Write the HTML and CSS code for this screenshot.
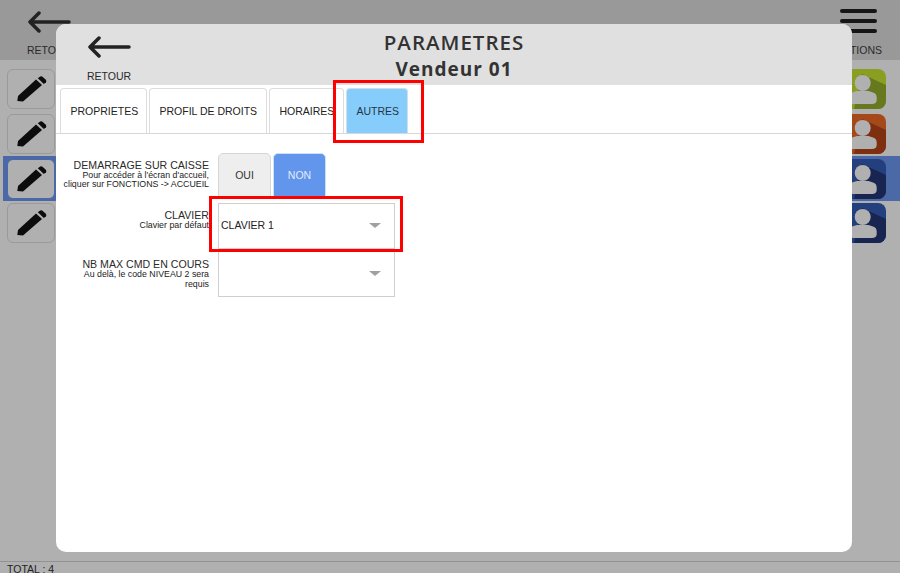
FILE: index.html
```html
<!DOCTYPE html>
<html lang="fr">
<head>
<meta charset="utf-8">
<title>Parametres</title>
<link rel="stylesheet" href="styles.css">
</head>
<body>
<div class="screen">
  <header class="top">
    <div class="top-action top-back">
      <svg class="arrow" viewBox="0 0 44 22"><path d="M42 11H3M12 2 3 11l9 9"/></svg>
      <span class="action-label">RETOUR</span>
    </div>
    <div class="top-action top-options">
      <div class="burger"><i></i><i></i><i></i></div>
      <span class="action-label">OPTIONS</span>
    </div>
  </header>

  <main class="list">
    <div class="row">
      <button class="edit"><svg viewBox="0 0 30 26"><use href="#pencil"/></svg></button>
      <svg class="avatar" viewBox="0 0 48 40"><use href="#person-green"/></svg>
    </div>
    <div class="row">
      <button class="edit"><svg viewBox="0 0 30 26"><use href="#pencil"/></svg></button>
      <svg class="avatar" viewBox="0 0 48 40"><use href="#person-orange"/></svg>
    </div>
    <div class="row row-selected">
      <button class="edit edit-selected"><svg viewBox="0 0 30 26"><use href="#pencil"/></svg></button>
      <svg class="avatar" viewBox="0 0 48 40"><use href="#person-blue"/></svg>
    </div>
    <div class="row">
      <button class="edit"><svg viewBox="0 0 30 26"><use href="#pencil"/></svg></button>
      <svg class="avatar" viewBox="0 0 48 40"><use href="#person-blue"/></svg>
    </div>
  </main>

  <footer class="total">TOTAL : 4</footer>

  <section class="modal">
    <div class="modal-head">
      <div class="modal-back">
        <svg class="arrow" viewBox="0 0 44 22"><path d="M42 11H3M12 2 3 11l9 9"/></svg>
        <span class="action-label">RETOUR</span>
      </div>
      <div class="modal-title">
        <h1>PARAMETRES</h1>
        <h2>Vendeur 01</h2>
      </div>
    </div>

    <nav class="tabs">
      <div class="tab tab-1">PROPRIETES</div>
      <div class="tab tab-2">PROFIL DE DROITS</div>
      <div class="tab tab-3">HORAIRES</div>
      <div class="tab tab-4">AUTRES</div>
    </nav>

    <div class="form">
      <div class="field field-toggle">
        <div class="label">
          <div class="label-main">DEMARRAGE SUR CAISSE</div>
          <div class="label-sub">Pour accéder à l'écran d'accueil, cliquer sur FONCTIONS -&gt; ACCUEIL</div>
        </div>
        <div class="toggle">
          <div class="toggle-btn">OUI</div>
          <div class="toggle-btn toggle-on">NON</div>
        </div>
      </div>
      <div class="field field-clavier">
        <div class="label">
          <div class="label-main">CLAVIER</div>
          <div class="label-sub">Clavier par défaut</div>
        </div>
        <div class="select select-clavier"><span>CLAVIER 1</span><i class="caret"></i></div>
      </div>
      <div class="field field-max">
        <div class="label">
          <div class="label-main">NB MAX CMD EN COURS</div>
          <div class="label-sub">Au delà, le code NIVEAU 2 sera requis</div>
        </div>
        <div class="select select-max"><span></span><i class="caret"></i></div>
      </div>
    </div>
  </section>

  <div class="mark mark-tab"></div>
  <div class="mark mark-select"></div>

  <svg class="defs" aria-hidden="true">
    <defs>
      <g id="pencil">
        <path d="M.3 25 1 20 19 3.500 25 9 6 25.500z"/>
        <path d="M20.800 2.300 23.200.6Q24.500 0 25.500.8L28.800 3.800Q29.800 5 29 6.200L26.800 8z"/>
      </g>
      <g id="person">
        <circle cx="24.700" cy="14" r="8" fill="#b0b0b0"/>
        <path d="M19 22 14 23.500C11.500 24.300 10.500 26 10.500 28.500V31C10.500 33.500 12 35 15 35H34C37 35 38.700 33.500 38.700 31V28.500C38.700 26 37.500 24.300 35 23.500L30.500 22z" fill="#b0b0b0"/>
      </g>
      <g id="person-green">
        <rect width="48" height="40" rx="8" fill="#8a9f22"/>
        <path d="M24 5 48 16V32a8 8 0 0 1-8 8H16z" fill="#67791e"/>
        <use href="#person"/>
      </g>
      <g id="person-orange">
        <rect width="48" height="40" rx="8" fill="#a5481a"/>
        <path d="M24 5 48 16V32a8 8 0 0 1-8 8H16z" fill="#7d2f10"/>
        <use href="#person"/>
      </g>
      <g id="person-blue">
        <rect width="48" height="40" rx="8" fill="#233f7d"/>
        <path d="M24 5 48 16V32a8 8 0 0 1-8 8H16z" fill="#172550"/>
        <use href="#person"/>
      </g>
    </defs>
  </svg>
</div>
</body>
</html>
```

FILE: styles.css
```css
* { box-sizing: border-box; }
html, body { margin: 0; padding: 0; }
body { font-family: "Liberation Sans", Arial, sans-serif; color: #222; background: #b0b0b0; }

.screen {
  position: relative;
  width: 900px;
  height: 573px;
  overflow: hidden;
  display: flex;
  flex-direction: column;
  background: #b0b0b0;
}

.top {
  flex: 0 0 60px;
  display: flex;
  justify-content: space-between;
  padding: 0 18px 0 27px;
  background: #999;
}
.top-action { display: flex; flex-direction: column; }
.top-back { align-items: flex-start; padding-top: 11px; }
.top-options { align-items: flex-end; padding-top: 9px; }
.action-label { font-size: 10.500px; line-height: 13px; color: #2a2a2a; }
.top-back .action-label { margin-top: 11px; }
.top-options .action-label { margin-top: 11px; }

.arrow { width: 44px; height: 22px; display: block; }
.arrow path { fill: none; stroke: #222; stroke-width: 3.500; stroke-linecap: round; stroke-linejoin: round; }

.burger { display: flex; flex-direction: column; gap: 6px; margin-right: 5px; width: 37px; }
.burger i { display: block; height: 4px; border-radius: 2px; background: #161616; }

.list { flex: 1; min-height: 0; padding: 7px 14px 0 3px; display: flex; flex-direction: column; }
.row {
  flex: 0 0 44.67px;
  display: flex;
  align-items: center;
  justify-content: space-between;
  padding-left: 4px;
}
.row-selected { background: #4a69a6; margin-right: -14px; padding-right: 14px; }
.edit {
  width: 48px;
  height: 40px;
  padding: 0 0 0 2px;
  display: flex;
  align-items: center;
  justify-content: center;
  background: #b0b0b0;
  border: 1px solid #9a9a9a;
  border-radius: 6px;
}
.edit-selected { border: 1.500px solid #4a69a6; }
.edit svg { width: 30px; height: 26px; fill: #0c0c0c; }
.avatar { width: 48px; height: 40px; display: block; }

.total {
  flex: 0 0 12px;
  min-height: 0;
  overflow: hidden;
  padding-left: 7px;
  font-size: 10.500px;
  line-height: 15px;
  border-top: 1px solid #929292;
  color: #222;
}

.modal {
  position: absolute;
  left: 56px;
  top: 24px;
  width: 796px;
  height: 528px;
  display: flex;
  flex-direction: column;
  background: #fff;
  border-radius: 10px;
  overflow: hidden;
}
.modal-head {
  flex: 0 0 60.500px;
  position: relative;
  display: flex;
  justify-content: center;
  background: #e0e0e0;
}
.modal-back {
  position: absolute;
  left: 31px;
  top: 12px;
  display: flex;
  flex-direction: column;
}
.modal-back .action-label { margin-top: 12px; }
.modal-title { text-align: center; color: #333; font-family: "Open Sans", sans-serif; padding-top: 5px; }
.modal-title h1 { margin: 0; font-size: 20.500px; line-height: 27px; font-weight: 600; letter-spacing: 1px; }
.modal-title h2 { margin: 0; font-size: 19px; line-height: 27px; font-weight: 700; letter-spacing: 1px; }

.tabs {
  flex: 0 0 49px;
  display: flex;
  align-items: flex-end;
  gap: 2px;
  padding-left: 4px;
  border-bottom: 1px solid #d8d8d8;
}
.tab {
  height: 45px;
  display: flex;
  align-items: center;
  white-space: nowrap;
  font-size: 10.500px;
  color: #222;
  border: 1px solid #ddd;
  border-bottom: 0;
  border-radius: 4px 4px 0 0;
  background: #fff;
  padding-left: 9.500px;
}
.tab-1 { width: 87px; }
.tab-2 { width: 118px; }
.tab-3 { width: 75px; }
.tab-4 { width: 62px; background: #87cdfb; border-color: #cfe0ea; color: #243444; }

.form { position: relative; padding: 19px 0 0 6px; }
.field { display: flex; gap: 9px; }
.field-toggle { align-items: flex-start; height: 50px; }
.field-clavier { align-items: flex-start; height: 48.500px; }
.field-max { align-items: flex-start; }
.label { width: 147px; text-align: right; }
.label-main { font-size: 10.600px; line-height: 12px; color: #2a2a2a; }
.label-sub { font-size: 8.800px; line-height: 9.500px; color: #222; }
.field-toggle .label { padding-top: 6px; }
.field-clavier .label { padding-top: 6px; }
.field-max .label { padding-top: 7px; }

.toggle { display: flex; gap: 2px; }
.toggle-btn {
  width: 53px;
  height: 44px;
  display: flex;
  align-items: center;
  justify-content: center;
  font-size: 10.500px;
  color: #333;
  background: #eee;
  border: 1px solid #d6d6d6;
  border-radius: 5px 5px 0 0;
}
.toggle-on { background: #6295ec; border-color: #cfdff5; color: #e4ecfa; }

.select {
  position: relative;
  width: 177px;
  height: 46px;
  display: flex;
  align-items: center;
  padding: 0 0 1px 2px;
  font-size: 10.500px;
  color: #222;
  background: #fff;
  border: 1px solid #cfcfcf;
}
.caret {
  position: absolute;
  right: 13px;
  top: 19px;
  width: 0;
  height: 0;
  border-left: 6px solid transparent;
  border-right: 6px solid transparent;
  border-top: 5px solid #a0a0a0;
}

.mark { position: absolute; border: 3.500px solid #f00; }
.mark-tab { left: 333px; top: 80px; width: 91px; height: 63px; }
.mark-select { left: 209px; top: 196px; width: 194px; height: 56px; }

.defs { position: absolute; width: 0; height: 0; }
```
